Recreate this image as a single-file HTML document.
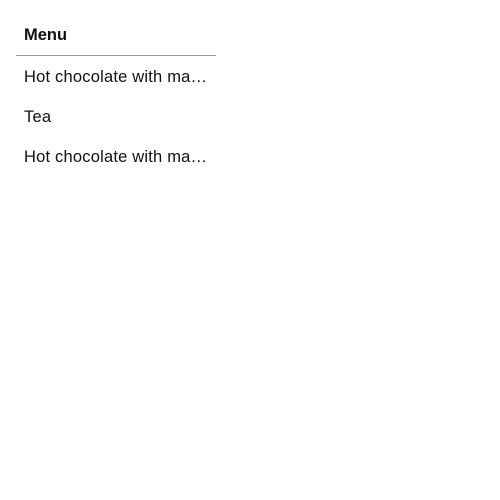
<!DOCTYPE html>
<html><head><style>
body{margin:0;background:#fff;font-family:"Liberation Sans",sans-serif;color:#111;}
.menu{position:absolute;left:16px;top:21px;width:200px;}
.h{font-weight:bold;font-size:16.5px;height:35px;line-height:29px;padding-left:8px;border-bottom:1px solid #999;box-sizing:border-box;}
.i{font-size:16.5px;letter-spacing:0.2px;height:40px;line-height:42px;padding:0 8px;white-space:nowrap;overflow:hidden;}
</style></head><body>
<div class="menu">
<div class="h">Menu</div>
<div class="i">Hot chocolate with ma…</div>
<div class="i">Tea</div>
<div class="i">Hot chocolate with ma…</div>
</div>
</body></html>
